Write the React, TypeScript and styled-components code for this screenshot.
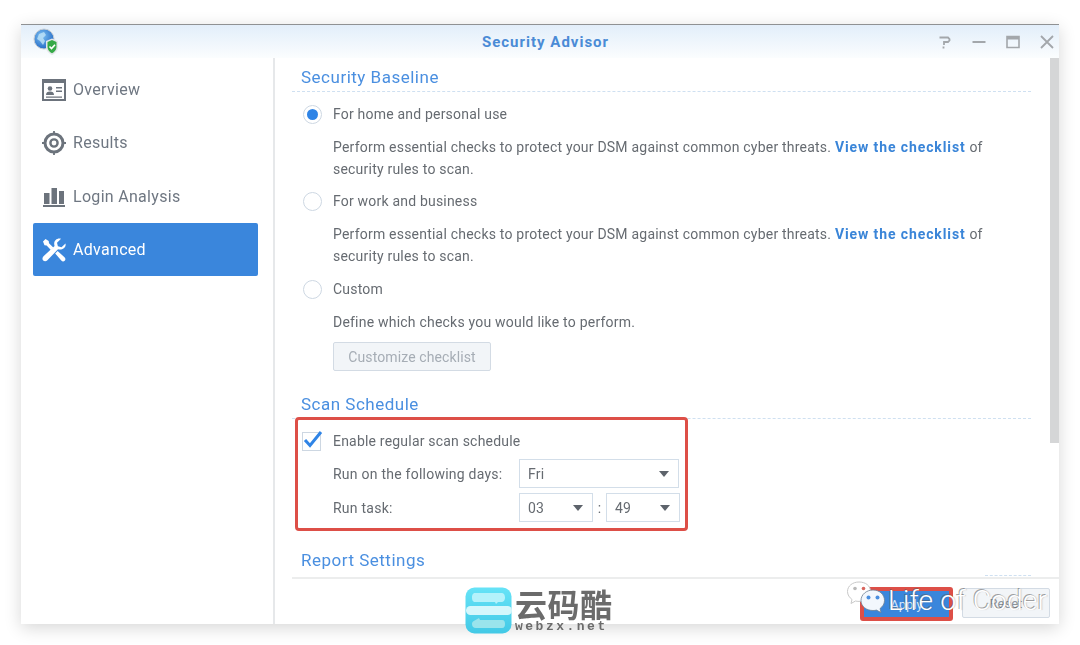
import React from "react";
import styled, { createGlobalStyle } from "styled-components";

const Global = createGlobalStyle`
  html, body { margin: 0; padding: 0; background: #fff; }
  body { font-family: Roboto, "Liberation Sans", sans-serif; }
`;

const Page = styled.div`
  position: relative;
  width: 1080px;
  height: 645px;
  padding: 24px 21px 21px;
  box-sizing: border-box;
  overflow: hidden;
  filter: blur(0.35px);
`;
const Win = styled.div`
  width: 1038px;
  height: 600px;
  display: flex;
  flex-direction: column;
  background: #fff;
  border-top: 1px solid #8f9193;
  box-sizing: border-box;
  box-shadow: 0 4px 16px rgba(0, 0, 0, 0.16);
`;
const TitleBar = styled.div`
  height: 33px;
  flex: none;
  display: grid;
  grid-template-columns: 1fr auto 1fr;
  align-items: center;
  padding: 0 5px 0 12px;
  background: linear-gradient(#e2eefa, #fbfdfe);
`;
const Title = styled.div`
  font-size: 15px;
  font-weight: 700;
  letter-spacing: 1px;
  color: #4a8bd6;
  margin-left: 4px;
`;
const WinButtons = styled.div`
  display: flex;
  align-items: center;
  justify-content: flex-end;
  gap: 20px;
`;
const Body = styled.div`
  flex: 1;
  min-height: 0;
  display: flex;
`;
const Sidebar = styled.div`
  width: 254px;
  flex: none;
  box-sizing: border-box;
  border-right: 2px solid #e6e8ea;
  padding: 5px 15px 0 12px;
  display: flex;
  flex-direction: column;
`;
const NavItem = styled.div<{ $active?: boolean }>`
  height: 53.3px;
  display: flex;
  align-items: center;
  gap: 7px;
  padding-left: 9px;
  border-radius: 2px;
  font-size: 16px;
  letter-spacing: 0.3px;
  color: ${(p) => (p.$active ? "#fff" : "#6f7782")};
  background: ${(p) => (p.$active ? "#3a86dc" : "transparent")};
`;
const NavIcon = styled.svg`
  width: 24px;
  height: 24px;
  flex: none;
`;
const Main = styled.div`
  flex: 1;
  min-width: 0;
  display: flex;
  flex-direction: column;
`;
const ScrollRow = styled.div`
  flex: 1;
  min-height: 0;
  display: flex;
  overflow: hidden;
`;
const Content = styled.div`
  flex: 1;
  min-width: 0;
  padding: 7px 19px 0 17px;
`;
const Track = styled.div`
  width: 9px;
  flex: none;
`;
const Thumb = styled.div`
  height: 385px;
  background: #d5d6d7;
`;
const SectionTitle = styled.div<{ $gap?: number }>`
  height: 27px;
  margin-top: ${(p) => p.$gap ?? 0}px;
  padding-left: 9px;
  box-sizing: border-box;
  line-height: 24px;
  font-size: 17px;
  letter-spacing: 0.5px;
  color: #4a8fe0;
  border-bottom: 1px dashed #cfe0f1;
`;
const CutTitle = styled(SectionTitle)`
  position: relative;
  height: 28px;
  border-bottom: none;
  &::after {
    content: "";
    position: absolute;
    right: 0;
    bottom: 0;
    width: 46px;
    border-bottom: 1px dashed #cfe0f1;
  }
`;
const OptionRow = styled.div<{ $top?: number }>`
  display: flex;
  align-items: center;
  gap: 11px;
  height: 22px;
  margin-top: ${(p) => p.$top ?? 0}px;
  padding-left: 11px;
`;
const Label = styled.span`
  font-size: 14px;
  letter-spacing: 0.2px;
  color: #666b71;
`;
const Radio = styled.span<{ $on?: boolean }>`
  width: 19px;
  height: 19px;
  flex: none;
  box-sizing: border-box;
  border-radius: 50%;
  border: 1px solid #cdd7e2;
  display: flex;
  align-items: center;
  justify-content: center;
  &::after {
    content: "";
    width: 11px;
    height: 11px;
    border-radius: 50%;
    background: ${(p) => (p.$on ? "#2f84e6" : "transparent")};
  }
`;
const Desc = styled.div<{ $top?: number }>`
  margin-top: ${(p) => p.$top ?? 0}px;
  padding-left: 41px;
  font-size: 14px;
  line-height: 22px;
  letter-spacing: 0.215px;
  color: #666b71;
`;
const Link = styled.b`
  color: #3a85d8;
  font-weight: 700;
  letter-spacing: 0.9px;
`;
const GhostButton = styled.div`
  width: 158px;
  height: 29px;
  margin: 9px 0 0 41px;
  box-sizing: border-box;
  border: 1px solid #d3dbe4;
  border-radius: 2px;
  background: #f2f5f8;
  display: flex;
  align-items: center;
  justify-content: center;
  font-size: 14px;
  letter-spacing: 0.1px;
  color: #a6adb5;
`;
const RedBox = styled.div`
  width: 393px;
  height: 114px;
  margin: -2px 0 0 3px;
  box-sizing: border-box;
  position: relative;
  border: 3px solid #dd4f47;
  border-radius: 4px;
  padding: 11px 5px 0 4px;
`;
const CheckRow = styled.div`
  display: flex;
  align-items: center;
  gap: 12px;
  height: 20px;
`;
const CheckBox = styled.span`
  position: relative;
  width: 19px;
  height: 19px;
  flex: none;
  box-sizing: border-box;
  border: 1px solid #cdd7e2;
`;
const CheckMark = styled.svg`
  position: absolute;
  left: -1px;
  top: -4px;
  width: 22px;
  height: 22px;
`;
const FieldRow = styled.div<{ $top: number }>`
  display: flex;
  align-items: center;
  height: 29px;
  margin-top: ${(p) => p.$top}px;
  padding-left: 31px;
`;
const FieldLabel = styled(Label)`
  width: 186px;
  flex: none;
  letter-spacing: 0.24px;
`;
const Select = styled.div<{ $w: number }>`
  width: ${(p) => p.$w}px;
  height: 29px;
  flex: none;
  box-sizing: border-box;
  border: 1px solid #d3dee9;
  display: flex;
  align-items: center;
  justify-content: space-between;
  padding: 0 9px 0 8px;
  font-size: 14px;
  letter-spacing: 0.24px;
  color: #666b71;
  &::after {
    content: "";
    border-left: 5.5px solid transparent;
    border-right: 5.5px solid transparent;
    border-top: 6px solid #5d636b;
  }
`;
const Colon = styled.span`
  width: 13px;
  text-align: center;
  font-size: 14px;
  color: #666b71;
`;
const Footer = styled.div`
  height: 47px;
  flex: none;
  margin-left: 17px;
  box-sizing: border-box;
  background: #fff;
  border-top: 2px solid #eceded;
  display: flex;
  justify-content: flex-end;
  align-items: flex-start;
  gap: 9px;
  padding: 8px 9px 0 0;
`;
const Apply = styled.div`
  width: 93px;
  height: 34px;
  box-sizing: border-box;
  border: 4px solid #dd4f47;
  border-radius: 3px;
  background: #3a86dc;
  display: flex;
  align-items: center;
  justify-content: center;
  font-size: 13px;
  color: #d6e8fb;
`;
const Reset = styled.div`
  width: 88px;
  height: 30px;
  margin-top: 1px;
  box-sizing: border-box;
  border: 1px solid #d3dbe4;
  border-radius: 2px;
  background: #f2f5f8;
  display: flex;
  align-items: center;
  justify-content: center;
  font-size: 13px;
  color: #8b939c;
`;
const Watermark = styled.div`
  position: absolute;
  left: 465px;
  top: 587px;
  display: flex;
  gap: 3px;
`;
const LogoBox = styled.svg`
  width: 47px;
  height: 47px;
  flex: none;
`;
const LogoText = styled.div`
  display: flex;
  flex-direction: column;
`;
const LogoCn = styled.div`
  font-family: "Noto Sans CJK SC", sans-serif;
  font-weight: 700;
  font-size: 32px;
  line-height: 33px;
  letter-spacing: 0.5px;
  color: #6b6b6b;
`;
const LogoEn = styled.div`
  font-family: "Liberation Mono", monospace;
  font-weight: 700;
  font-size: 13px;
  line-height: 13px;
  letter-spacing: 2.5px;
  color: #6b6b6b;
`;
const Wechat = styled.div`
  position: absolute;
  left: 846px;
  top: 580px;
  display: flex;
  align-items: center;
`;
const WechatIcon = styled.svg`
  width: 44px;
  height: 40px;
  flex: none;
`;
const WechatText = styled.div`
  font-family: Roboto, sans-serif;
  font-weight: 300;
  font-size: 28px;
  color: #fff;
  margin-left: -2px;
  letter-spacing: 0.2px;
  text-shadow: -1px -1px 0 rgba(90, 90, 90, 0.55), 1px 0 1px rgba(90, 90, 90, 0.25);
`;

const AppIcon = () => (
  <svg width="26" height="28" viewBox="0 0 26 28">
    <defs>
      <radialGradient id="globe" cx="40%" cy="35%" r="70%">
        <stop offset="0" stopColor="#7cc0f2" />
        <stop offset="1" stopColor="#1f66c4" />
      </radialGradient>
    </defs>
    <circle cx="11" cy="11" r="10" fill="url(#globe)" stroke="#c9ced3" strokeWidth="1" />
    <path d="M6 6l5-2 2 3-3 3 2 3-2 4-3-4-3-2z" fill="#bfe3f8" opacity=".8" />
    <path d="M13 13l6-2.500 6 2.500v6c0 4-3 6.500-6 8-3-1.500-6-4-6-8z" fill="#e4e7ea" />
    <path d="M14.500 14l4.500-2 4.500 2v5c0 3-2.200 5-4.500 6.300-2.300-1.300-4.500-3.300-4.500-6.300z" fill="#35a947" />
    <path d="M16.500 18.500l2 2 3.500-3.800" fill="none" stroke="#fff" strokeWidth="1.600" />
  </svg>
);

const WinIcons = () => (
  <WinButtons>
    <svg width="14" height="14" viewBox="0 0 14 14" fill="none" stroke="#a3a7ab" strokeWidth="1.800">
      <path d="M1.500 2.500h8.500l1.500 1.500v1.500l-1.500 1.500h-4v3M5.500 11.500v2" />
    </svg>
    <svg width="14" height="14" viewBox="0 0 14 14">
      <rect x="0.500" y="6" width="13" height="2" fill="#a3a7ab" />
    </svg>
    <svg width="14" height="14" viewBox="0 0 14 14">
      <path d="M1 1.500h12v11H1z" fill="none" stroke="#a3a7ab" strokeWidth="1.600" />
      <rect x="1" y="1.500" width="12" height="3" fill="#a3a7ab" />
    </svg>
    <svg width="14" height="14" viewBox="0 0 14 14" fill="none" stroke="#a3a7ab" strokeWidth="1.800">
      <path d="M1 1l12 12M13 1L1 13" />
    </svg>
  </WinButtons>
);

const OverviewIcon = () => (
  <NavIcon viewBox="0 0 24 24">
    <rect x="1" y="2" width="22" height="20" fill="none" stroke="#6c737c" strokeWidth="2" />
    <rect x="0.500" y="2" width="23" height="3" fill="#6c737c" />
    <circle cx="8" cy="10.500" r="2.300" fill="#6c737c" />
    <path d="M4 17c0-2.500 1.500-3.500 4-3.500s4 1 4 3.500z" fill="#6c737c" />
    <path d="M14 9h6v1.600h-6zM14 12.500h6v1.600h-6zM4 18.500h16v1.200H4z" fill="#6c737c" />
  </NavIcon>
);
const ResultsIcon = () => (
  <NavIcon viewBox="0 0 24 24" fill="none" stroke="#6c737c">
    <circle cx="12" cy="12" r="9" strokeWidth="3" />
    <circle cx="12" cy="12" r="3.600" strokeWidth="2.400" />
    <path d="M12 0v3.500M12 20.500V24M0 12h3.500M20.500 12H24" strokeWidth="1.800" />
  </NavIcon>
);
const LoginIcon = () => (
  <NavIcon viewBox="0 0 24 24" fill="#6c737c">
    <rect x="2" y="9" width="5.500" height="11" />
    <rect x="9.500" y="4" width="5.500" height="16" />
    <rect x="17" y="7" width="5" height="13" />
    <rect x="1" y="21" width="22" height="2" />
  </NavIcon>
);
const AdvancedIcon = () => (
  <NavIcon viewBox="0 0 24 24" fill="#fff">
    <path d="M23.500 5.500l-4 3.800-3.600-1-.9-3.500L19 .8C15.500-.3 12 2.200 12.200 6c0 .8.200 1.300.4 2L1.500 18.300c-1.500 1.500-1.200 3.300-.3 4.300 1 1 2.900 1.100 4.200-.3L16 11.200c3.800 1.300 8.500-1.500 7.500-5.700z" />
    <path d="M1 3.500L3.500 1l3.200 2 .3 2.300 4.300 4.300-2.400 2.300-4.300-4.300L2.500 7.200zM13.200 15.500l2.400-2.400 6.900 6.200c1.200 1.200 1.200 2.500.2 3.400-1 1-2.400.9-3.400-.2z" />
  </NavIcon>
);

const LogoMark = () => (
  <LogoBox viewBox="0 0 47 47">
    <defs>
      <linearGradient id="logoBg" x1="0" y1="0" x2="0" y2="1">
        <stop offset="0" stopColor="#66e3f7" />
        <stop offset="1" stopColor="#43c9e6" />
      </linearGradient>
    </defs>
    <rect x="0.500" y="0.500" width="46" height="46" rx="9" fill="url(#logoBg)" />
    <path d="M10 6h26c3 0 4 2 4 4.500S39 15 36 15h-3l-2 2-1-2H10c-2.500 0-3-2.500-3-4.500S7.500 6 10 6z" fill="#b4f2fb" />
    <rect x="1" y="19" width="46" height="9" rx="4.500" fill="#d5f7fc" />
    <path d="M11 33h26c2.500 0 3 2 3 4s-.500 4-3 4H11c-3 0-4-2-4-4 0-1 .500-2 1-2.500L14 31l1 2z" fill="#9ae4ec" />
  </LogoBox>
);

const WechatBubbles = () => (
  <WechatIcon viewBox="0 0 44 40">
    <path d="M13 2c-6.500 0-11.500 4-11.500 9.500 0 3.500 2 6 4.500 8l-1 4 4.500-2.500c1 .3 2 .4 3.500.4 6.500 0 11.500-4 11.500-9.900S19.500 2 13 2z" fill="#fff" stroke="#c9c9c9" />
    <circle cx="9" cy="8.500" r="1.800" fill="#b9b9b9" />
    <circle cx="17.500" cy="8.500" r="1.800" fill="#d9665f" />
    <path d="M27 10c-6.500 0-12 4.500-12 10.500 0 6 5.500 10 12 10 1.300 0 2.500-.1 3.500-.4l4.500 2.500-1-4c2.500-2 4.500-4.500 4.500-8.100C38.500 14.500 33.500 10 27 10z" fill="#f2f7fd" stroke="#6d7f92" strokeWidth="0.800" />
    <circle cx="22.500" cy="17.500" r="2" fill="#4a8fe0" />
    <circle cx="31.500" cy="17.500" r="2" fill="#4a8fe0" />
  </WechatIcon>
);

const App: React.FC = () => {
  const nav = [
    { label: "Overview", icon: <OverviewIcon /> },
    { label: "Results", icon: <ResultsIcon /> },
    { label: "Login Analysis", icon: <LoginIcon /> },
    { label: "Advanced", icon: <AdvancedIcon />, active: true },
  ];
  return (
    <Page>
      <Global />
      <Win>
        <TitleBar>
          <AppIcon />
          <Title>Security Advisor</Title>
          <WinIcons />
        </TitleBar>
        <Body>
          <Sidebar>
            {nav.map((n) => (
              <NavItem key={n.label} $active={n.active}>
                {n.icon}
                {n.label}
              </NavItem>
            ))}
          </Sidebar>
          <Main>
            <ScrollRow>
              <Content>
                <SectionTitle>Security Baseline</SectionTitle>
                <OptionRow $top={11}>
                  <Radio $on />
                  <Label>For home and personal use</Label>
                </OptionRow>
                <Desc $top={11}>
                  Perform essential checks to protect your DSM against common cyber threats. <Link>View the checklist</Link> of
                  <br />
                  security rules to scan.
                </Desc>
                <OptionRow $top={10}>
                  <Radio />
                  <Label>For work and business</Label>
                </OptionRow>
                <Desc $top={11}>
                  Perform essential checks to protect your DSM against common cyber threats. <Link>View the checklist</Link> of
                  <br />
                  security rules to scan.
                </Desc>
                <OptionRow $top={11}>
                  <Radio />
                  <Label>Custom</Label>
                </OptionRow>
                <Desc $top={11}>Define which checks you would like to perform.</Desc>
                <GhostButton>Customize checklist</GhostButton>
                <SectionTitle $gap={21}>Scan Schedule</SectionTitle>
                <RedBox>
                  <CheckRow>
                    <CheckBox>
                      <CheckMark viewBox="0 0 22 22">
                        <path d="M3 11l5 5.500L19 3" fill="none" stroke="#2f84e6" strokeWidth="3" />
                      </CheckMark>
                    </CheckBox>
                    <Label>Enable regular scan schedule</Label>
                  </CheckRow>
                  <FieldRow $top={8}>
                    <FieldLabel>Run on the following days:</FieldLabel>
                    <Select $w={160}>Fri</Select>
                  </FieldRow>
                  <FieldRow $top={5}>
                    <FieldLabel>Run task:</FieldLabel>
                    <Select $w={74}>03</Select>
                    <Colon>:</Colon>
                    <Select $w={74}>49</Select>
                  </FieldRow>
                </RedBox>
                <CutTitle $gap={17}>Report Settings</CutTitle>
              </Content>
              <Track>
                <Thumb />
              </Track>
            </ScrollRow>
            <Footer>
              <Apply>Apply</Apply>
              <Reset>Reset</Reset>
            </Footer>
          </Main>
        </Body>
      </Win>
      <Watermark>
        <LogoMark />
        <LogoText>
          <LogoCn>云码酷</LogoCn>
          <LogoEn>webzx.net</LogoEn>
        </LogoText>
      </Watermark>
      <Wechat>
        <WechatBubbles />
        <WechatText>Life of Coder</WechatText>
      </Wechat>
    </Page>
  );
};

export default App;
